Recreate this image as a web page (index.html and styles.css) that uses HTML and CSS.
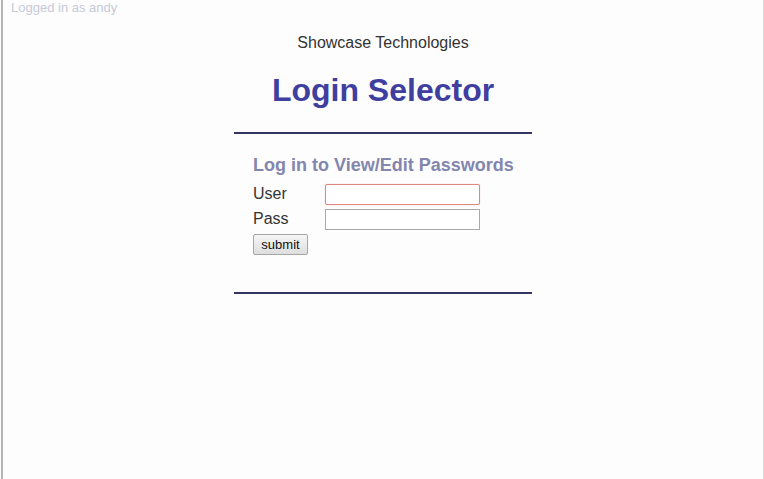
FILE: index.html
```html
<!DOCTYPE html>
<html>
<head>
<meta charset="utf-8">
<link rel="stylesheet" href="styles.css">
</head>
<body>
<div class="frame">
  <div class="status">Logged in as andy</div>
  <div class="company">Showcase Technologies</div>
  <h1 class="title">Login Selector</h1>
  <div class="panel">
    <div class="rule"></div>
    <form class="login">
      <h2 class="subtitle">Log in to View/Edit Passwords</h2>
      <div class="fields">
        <label class="label">User</label>
        <input class="field focused" type="text">
        <label class="label">Pass</label>
        <input class="field" type="password">
      </div>
      <button class="submit" type="button">submit</button>
    </form>
    <div class="rule"></div>
  </div>
</div>
</body>
</html>
```

FILE: styles.css
```css
html, body {
  margin: 0;
  padding: 0;
  background: #fdfdfd;
}
.frame {
  margin-left: 1px;
  height: 479px;
  box-sizing: border-box;
  border-left: 2px solid #b4b4b4;
  border-right: 1px solid #dcdcdc;
  font-family: "Liberation Sans", Arial, sans-serif;
  color: #333;
}
.status {
  padding: 0 0 0 8px;
  font-size: 13px;
  line-height: 15px;
  color: #c6c9d9;
}
.company {
  margin-top: 19px;
  text-align: center;
  font-size: 16px;
  line-height: 18px;
  color: #333;
}
.title {
  margin: 20px 0 0;
  text-align: center;
  font-size: 32px;
  line-height: 37px;
  font-weight: bold;
  color: #3f3f9f;
}
.panel {
  width: 298px;
  margin: 23px auto 0;
}
.rule {
  height: 2px;
  background: #343366;
}
.login {
  padding: 21px 0 37px 19px;
  margin: 0;
}
.subtitle {
  margin: 0 0 8px;
  font-size: 18px;
  line-height: 21px;
  font-weight: bold;
  color: #8386ad;
}
.fields {
  display: grid;
  grid-template-columns: 72px 155px;
  row-gap: 4px;
  align-items: center;
}
.label {
  font-size: 16px;
  line-height: 18px;
  color: #333;
  position: relative;
  top: -1px;
}
.field {
  box-sizing: border-box;
  width: 155px;
  height: 21px;
  margin: 0;
  padding: 1px 2px;
  border: 1px solid #a9a9a9;
  background: #fff;
  font-family: "Liberation Sans", Arial, sans-serif;
  font-size: 13px;
}
.field.focused {
  border: 1px solid #e08880;
  box-shadow: 0 0 1px #f0b0a8;
  border-radius: 2px;
}
.submit {
  margin-top: 4px;
  box-sizing: border-box;
  width: 55px;
  height: 21px;
  padding: 0;
  border: 1px solid #a6a6a6;
  border-radius: 2px;
  background: linear-gradient(#f6f6f6, #dedede);
  font-family: "Liberation Sans", Arial, sans-serif;
  font-size: 13px;
  color: #111;
}
```
